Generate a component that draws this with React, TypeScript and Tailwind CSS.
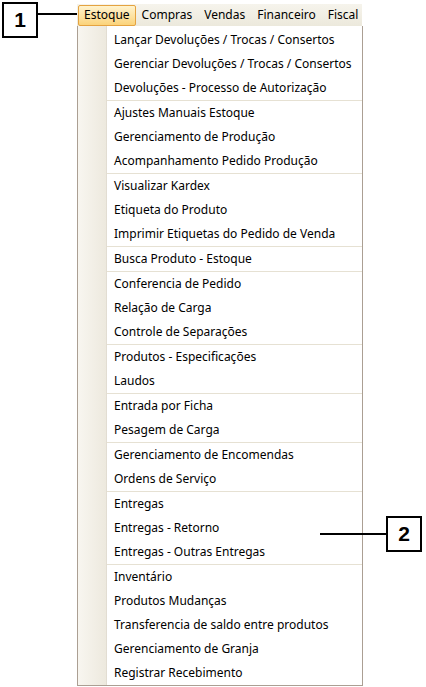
import React from 'react';

type Entry = string | null; // null = separator

const items: Entry[] = [
  'Lançar Devoluções / Trocas / Consertos',
  'Gerenciar Devoluções / Trocas / Consertos',
  'Devoluções - Processo de Autorização',
  null,
  'Ajustes Manuais Estoque',
  'Gerenciamento de Produção',
  'Acompanhamento Pedido Produção',
  null,
  'Visualizar Kardex',
  'Etiqueta do Produto',
  'Imprimir Etiquetas do Pedido de Venda',
  null,
  'Busca Produto - Estoque',
  null,
  'Conferencia de Pedido',
  'Relação de Carga',
  'Controle de Separações',
  null,
  'Produtos - Especificações',
  'Laudos',
  null,
  'Entrada por Ficha',
  'Pesagem de Carga',
  null,
  'Gerenciamento de Encomendas',
  'Ordens de Serviço',
  null,
  'Entregas',
  'Entregas - Retorno',
  'Entregas - Outras Entregas',
  null,
  'Inventário',
  'Produtos Mudanças',
  'Transferencia de saldo entre produtos',
  'Gerenciamento de Granja',
  'Registrar Recebimento',
];

const menus = ['Compras', 'Vendas', 'Financeiro', 'Fiscal'];

const Callout: React.FC<{ n: string }> = ({ n }) => (
  <div className="w-[36px] h-[36px] border-2 border-black bg-white flex items-center justify-center font-['Liberation_Sans',Arial,sans-serif] font-bold text-[21px] text-black">
    {n}
  </div>
);

export default function App() {
  return (
    <div className="relative w-[426px] h-[687px] bg-white overflow-hidden font-['Noto_Sans',sans-serif] text-[12px] text-black">
      <div className="flex items-start pt-[2px] pl-[2px]">
        {/* callout 1 */}
        <div className="flex items-start">
          <Callout n="1" />
          <div className="w-[39px] h-[2px] bg-black mt-[11px]" />
        </div>

        {/* menu bar + dropdown */}
        <div className="flex flex-col mt-[2px]">
          <div className="flex items-center w-[285px] h-[22px] bg-gradient-to-b from-[#f6f4ec] to-[#ece9dc]">
            <div className="h-[21px] ml-[1px] px-[5px] flex items-center border border-[#e5a340] rounded-[2px] bg-gradient-to-b from-[#fff3cd] to-[#fbd37a]">
              Estoque
            </div>
            {menus.map((m) => (
              <div key={m} className="px-[6px] h-[21px] flex items-center">
                {m}
              </div>
            ))}
          </div>

          <div className="w-[286px] h-[660px] border border-t-0 border-[#ab9f93] bg-white flex">
            <div className="w-[29px] shrink-0 bg-gradient-to-r from-[#f8f6f0] to-[#ede9de] border-r border-[#e2ddd2]" />
            <div className="flex-1 flex flex-col pt-[2px]">
              {items.map((it, i) =>
                it === null ? (
                  <div key={i} className="h-[1px] bg-[#e6e1d3]" />
                ) : (
                  <div key={i} className="h-[24px] flex items-center pl-[7px] whitespace-nowrap">
                    {it}
                  </div>
                )
              )}
            </div>
          </div>
        </div>
      </div>

      {/* callout 2 */}
      <div className="absolute left-[320px] top-[516px] flex items-center">
        <div className="w-[66px] h-[2px] bg-black" />
        <Callout n="2" />
      </div>
    </div>
  );
}
